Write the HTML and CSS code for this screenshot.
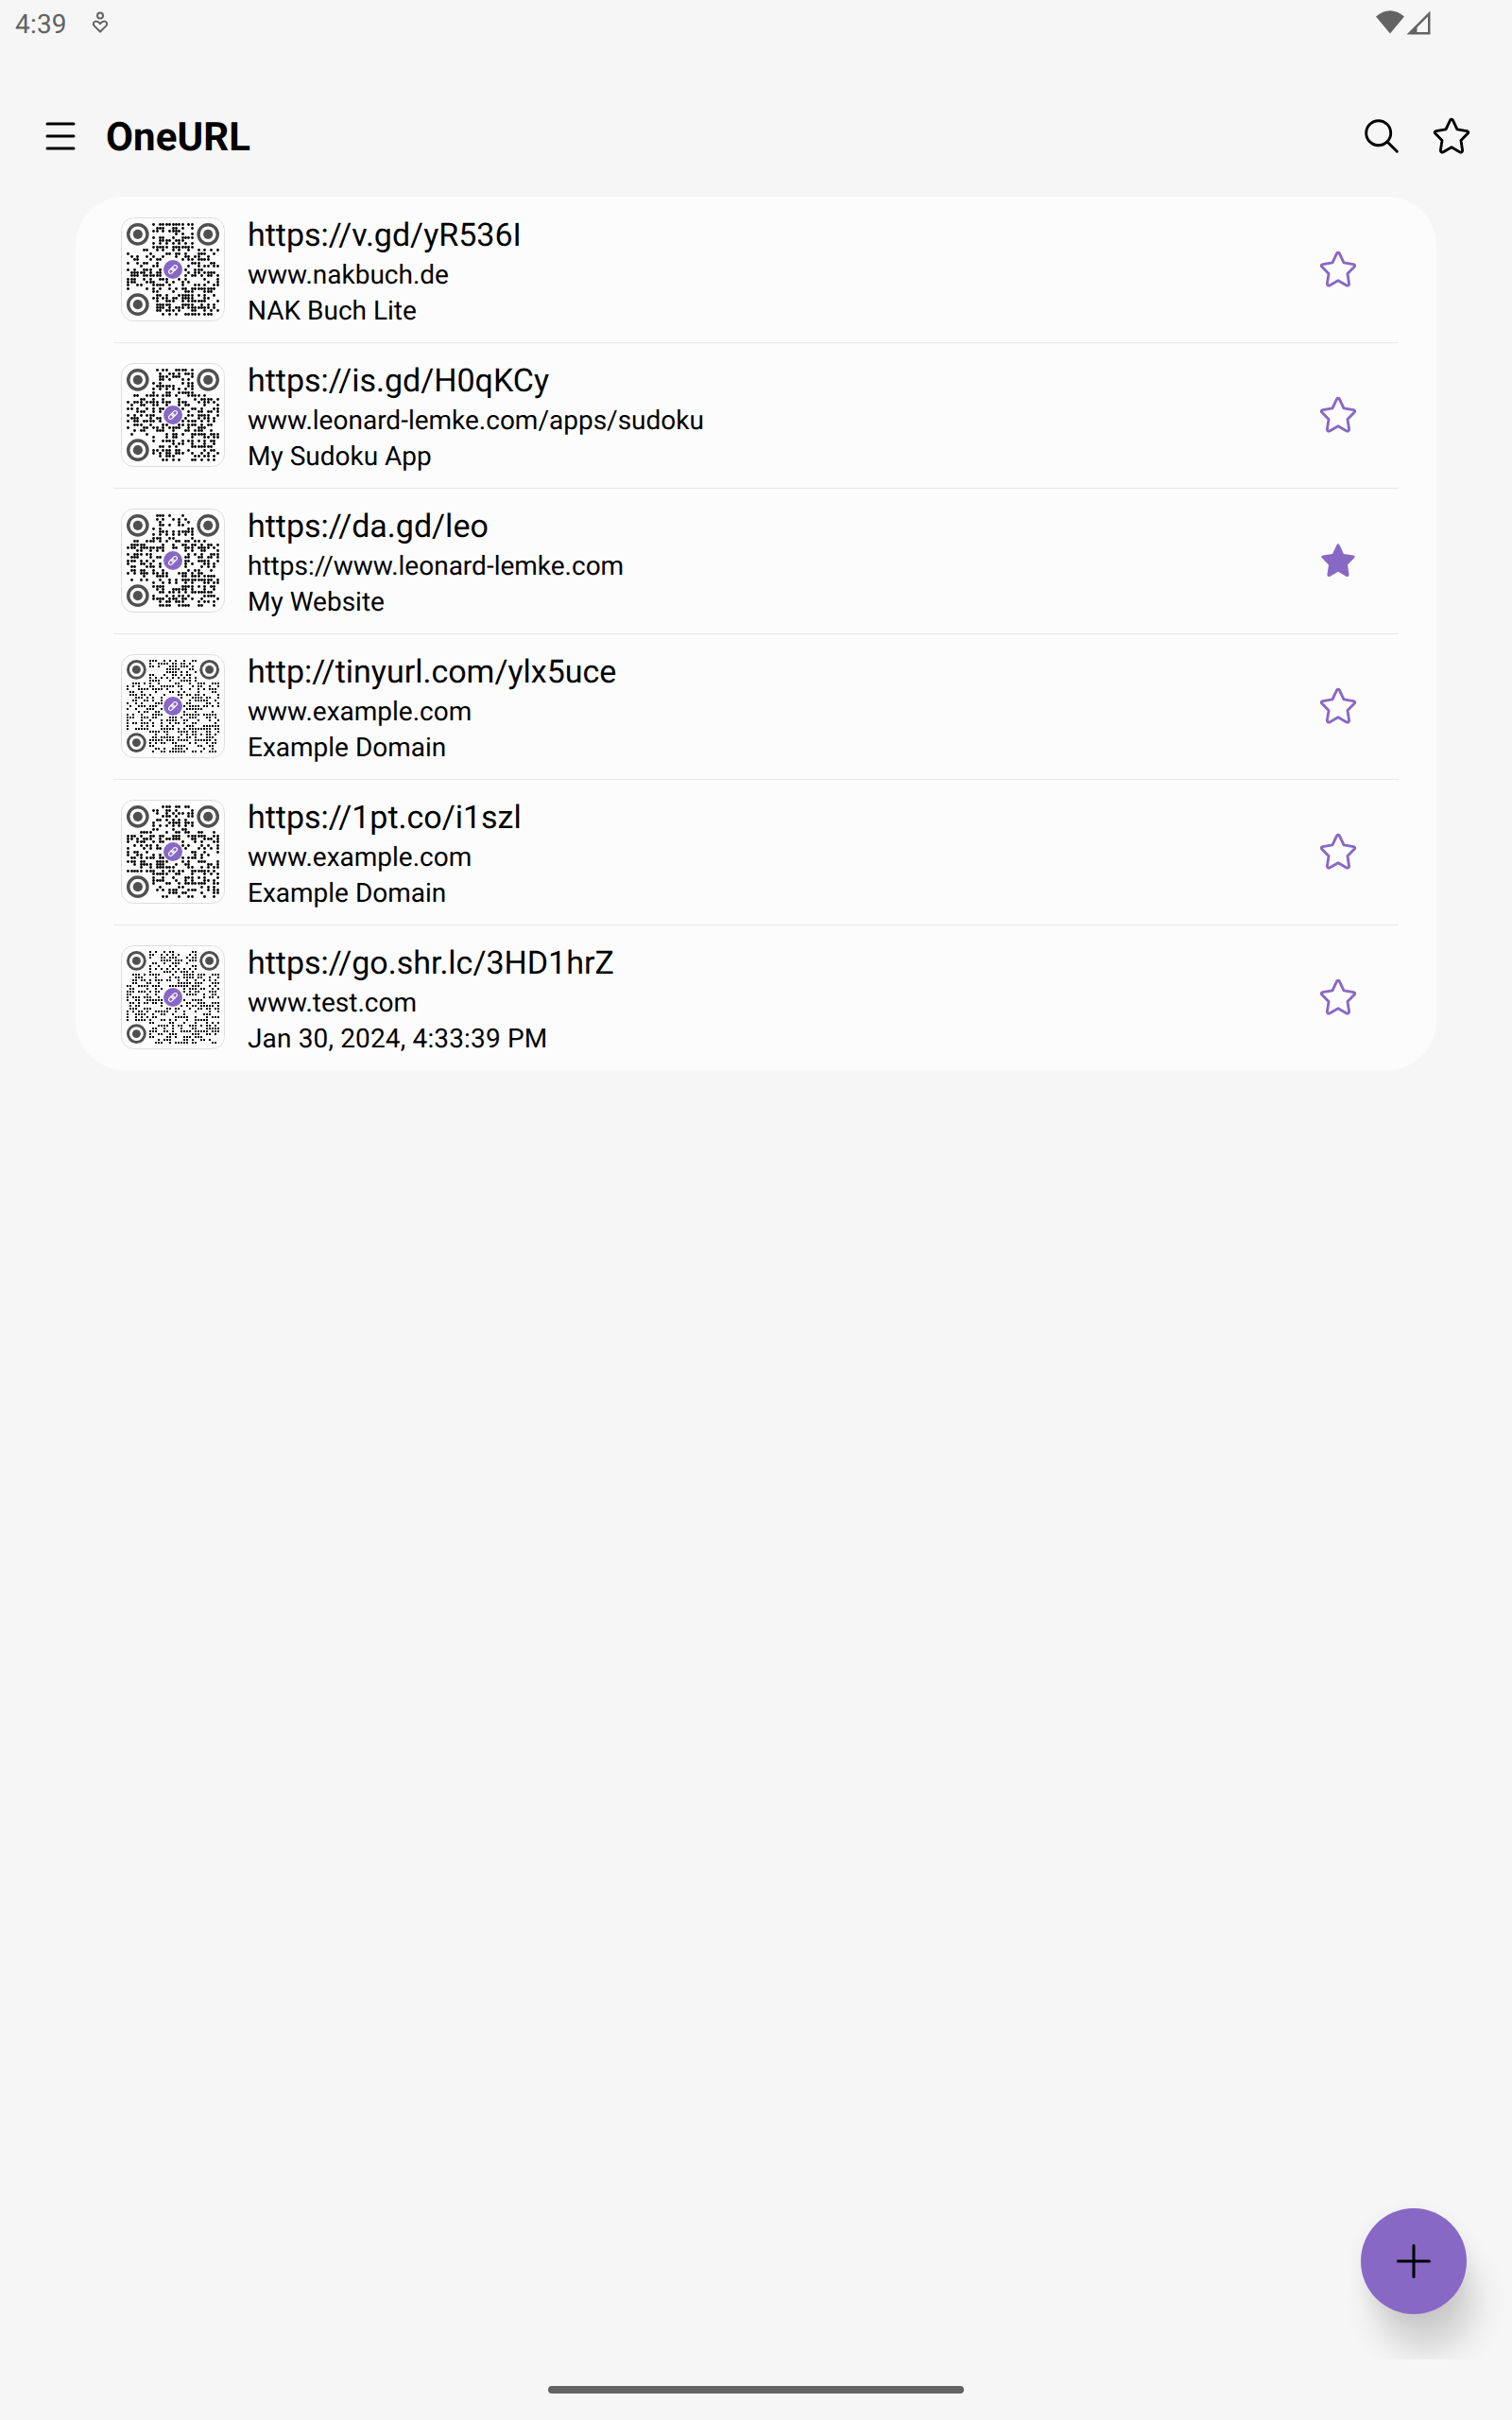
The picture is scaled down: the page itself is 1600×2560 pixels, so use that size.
FILE: index.html
```html
<!DOCTYPE html>
<html lang="en">
<head>
<meta charset="utf-8">
<title>OneURL</title>
<link rel="stylesheet" href="styles.css">
</head>
<body>
<svg width="0" height="0" class="defs">
  <symbol id="star" viewBox="0 0 40 40"><path transform="translate(0 .6)" d="M18.6 2.6Q20 .8 21.400 2.600L26 12.300L36.200 14Q38.600 14.700 37.300 16.500L30 24L31.600 34.500Q31.300 37.100 29 36.300L20 31.200L11 36.300Q8.700 37.100 8.400 34.500L10 24L2.700 16.500Q1.400 14.700 3.800 14L14 12.300Z"/></symbol>
</svg>
<div class="status">
  <span class="clock">4:39</span>
  <svg class="care" width="18" height="24" viewBox="0 0 18 24" fill="none" stroke="#636363" stroke-width="2"><circle cx="9" cy="4.500" r="3"/><path d="M9 21.500L3 15.600C-.5 12 4.500 7.800 9 13C13.500 7.800 18.500 12 15 15.600Z"/></svg>
  <svg class="signal" width="60" height="28" viewBox="0 0 60 28" fill="#636363"><path d="M1 7.500Q16 -5 31 7.500L16 25.500Z"/><path fill-rule="evenodd" d="M58.500 1.500V26.500H33.500ZM56 7.500L44.500 19V24H56Z"/></svg>
</div>
<header class="bar">
  <svg width="32" height="32" viewBox="0 0 32 32" stroke="#000" stroke-width="3" stroke-linecap="round"><path d="M2 3H30M2 16H30M2 29H30"/></svg>
  <h1>OneURL</h1>
  <svg class="search" width="36" height="36" viewBox="0 0 36 36" fill="none" stroke="#000" stroke-width="2.900" stroke-linecap="round"><circle cx="14.700" cy="14.700" r="13"/><path d="M24 24L34.300 34.300"/></svg>
  <svg class="star" width="40" height="40"><use href="#star"/></svg>
</header>
<main class="list">
  <article class="row"><svg class="qr" data-text="https://v.gd/yR536I"></svg><div class="txt"><h2>https://v.gd/yR536I</h2><p>www.nakbuch.de</p><p>NAK Buch Lite</p></div><svg class="star"><use href="#star"/></svg></article>
  <article class="row"><svg class="qr" data-text="https://is.gd/H0qKCy"></svg><div class="txt"><h2>https://is.gd/H0qKCy</h2><p>www.leonard-lemke.com/apps/sudoku</p><p>My Sudoku App</p></div><svg class="star"><use href="#star"/></svg></article>
  <article class="row"><svg class="qr" data-text="https://da.gd/leo"></svg><div class="txt"><h2>https://da.gd/leo</h2><p>https://www.leonard-lemke.com</p><p>My Website</p></div><svg class="star on"><use href="#star"/></svg></article>
  <article class="row"><svg class="qr" data-text="http://tinyurl.com/ylx5uce"></svg><div class="txt"><h2>http://tinyurl.com/ylx5uce</h2><p>www.example.com</p><p>Example Domain</p></div><svg class="star"><use href="#star"/></svg></article>
  <article class="row"><svg class="qr" data-text="https://1pt.co/i1szl"></svg><div class="txt"><h2>https://1pt.co/i1szl</h2><p>www.example.com</p><p>Example Domain</p></div><svg class="star"><use href="#star"/></svg></article>
  <article class="row"><svg class="qr" data-text="https://go.shr.lc/3HD1hrZ"></svg><div class="txt"><h2>https://go.shr.lc/3HD1hrZ</h2><p>www.test.com</p><p class="date">Jan 30, 2024, 4:33:39 PM</p></div><svg class="star"><use href="#star"/></svg></article>
</main>
<div class="fab-area"><button class="fab" aria-label="Add"><svg width="36" height="36" viewBox="0 0 36 36" stroke="#000" stroke-width="3" stroke-linecap="round"><path d="M18 1.500V34.500M1.500 18H34.500"/></svg></button></div>
<div class="nav"></div>
<script src="qr.js"></script>
</body>
</html>
```
FILE: styles.css
```css
* { box-sizing: border-box; margin: 0; padding: 0; }
body { background: #f6f6f6; color: #000; font-family: Roboto, sans-serif; text-rendering: geometricPrecision; width: 1600px; height: 2560px; overflow: hidden; display: flex; flex-direction: column; position: relative; }
.defs { position: absolute; }
.status { height: 48px; padding: 0 85px 0 16px; display: flex; align-items: center; color: #636363; }
.clock { font-size: 28px; line-height: 48px; margin-top: 3px; letter-spacing: .2px; }
.care { margin-left: 26px; }
.signal { margin-left: auto; }
.bar { height: 160px; padding: 32px 44px 0 48px; display: flex; align-items: center; }
.bar h1 { font-size: 42px; font-weight: 700; line-height: 48px; margin: 4px 0 0 32px; letter-spacing: .1px; flex: 1; }
.bar .star { margin-left: 36px; stroke: #000; }
.star { width: 40px; height: 40px; fill: none; stroke: #8868c5; stroke-width: 2.900px; stroke-linejoin: round; }
.on { fill: #8868c5; stroke-width: 0; }
.list { margin: 0 80px; background: #fcfcfc; border-radius: 52px; }
.row { height: 154px; margin: 0 40px; padding: 0 44px 0 8px; display: flex; align-items: center; }
.row + .row { box-shadow: inset 0 1px #e6e6e6; }
.qr { width: 110px; height: 110px; }
.txt { flex: 1; margin: 6px 0 0 24px; }
.txt h2 { font-size: 34px; font-weight: 400; line-height: 42px; margin-bottom: 2px; }
.txt p { font-size: 28px; line-height: 38px; }
.txt .date { letter-spacing: .150px; }
.fab-area { position: absolute; right: 0; bottom: 64px; width: 200px; height: 220px; overflow: hidden; padding: 60px 0 0 40px; }
.fab { width: 112px; height: 112px; border: 0; border-radius: 50%; background: #8868c5; display: flex; align-items: center; justify-content: center; box-shadow: 13px 42px 36px -4px rgba(0,0,0,.16), 0 4px 20px rgba(0,0,0,.06); }
.nav { position: absolute; left: 580px; bottom: 28px; width: 440px; height: 8px; border-radius: 4px; background: #636363; }
```
FILE: qr.js
```js
// Byte-mode QR encoder, error correction level H, versions 3 and 4.
const EXP = [], LOG = [];
for (let i = 0, x = 1; i < 255; i++) { EXP[i] = x; LOG[x] = i; x <<= 1; if (x > 255) x ^= 285; }
const mul = (a, b) => a && b ? EXP[(LOG[a] + LOG[b]) % 255] : 0;

function parity(data, n) {
  let gen = [1];
  for (let i = 0; i < n; i++) {
    const next = new Array(gen.length + 1).fill(0);
    gen.forEach((g, j) => { next[j] ^= g; next[j + 1] ^= mul(g, EXP[i]); });
    gen = next;
  }
  const r = data.concat(new Array(n).fill(0));
  for (let i = 0; i < data.length; i++) { const f = r[i]; gen.forEach((g, j) => { r[i + j] ^= mul(g, f); }); }
  return r.slice(data.length);
}

const MASKS = [
  (r, c) => (r + c) % 2 === 0, (r, c) => r % 2 === 0, (r, c) => c % 3 === 0, (r, c) => (r + c) % 3 === 0,
  (r, c) => ((r >> 1) + Math.floor(c / 3)) % 2 === 0, (r, c) => (r * c) % 2 + (r * c) % 3 === 0,
  (r, c) => ((r * c) % 2 + (r * c) % 3) % 2 === 0, (r, c) => ((r + c) % 2 + (r * c) % 3) % 2 === 0
];

function codewords(text, v) {
  const perBlock = v === 3 ? [13, 13] : [9, 9, 9, 9];
  const ecc = v === 3 ? 22 : 16;
  const total = perBlock.reduce((a, b) => a + b);
  let bits = '0100' + text.length.toString(2).padStart(8, '0');
  for (const ch of text) bits += ch.charCodeAt(0).toString(2).padStart(8, '0');
  bits += '0000';
  const data = bits.match(/.{8}/g).map(b => parseInt(b, 2));
  for (let i = 0; data.length < total; i++) data.push(i % 2 ? 17 : 236);
  const blocks = perBlock.map((n, i) => data.slice(i * n, i * n + n));
  const eccs = blocks.map(b => parity(b, ecc));
  const out = [];
  for (let i = 0; i < perBlock[0]; i++) blocks.forEach(b => out.push(b[i]));
  for (let i = 0; i < ecc; i++) eccs.forEach(b => out.push(b[i]));
  return out;
}

function build(text, v, mask) {
  const n = 17 + 4 * v;
  const m = Array.from({ length: n }, () => new Array(n).fill(-1));
  const square = (r0, c0, rad) => {
    for (let r = -rad; r <= rad; r++) for (let c = -rad; c <= rad; c++) {
      const y = r0 + r, x = c0 + c, d = Math.max(Math.abs(r), Math.abs(c));
      if (y >= 0 && x >= 0 && y < n && x < n) m[y][x] = rad === 4 ? +(d !== 2 && d !== 4) : +(d !== 1);
    }
  };
  square(3, 3, 4); square(3, n - 4, 4); square(n - 4, 3, 4);
  square(n - 7, n - 7, 2);
  for (let i = 8; i < n - 8; i++) m[6][i] = m[i][6] = (i + 1) % 2;
  const fmt = (2 << 3) | mask;
  let rem = fmt;
  for (let i = 0; i < 10; i++) rem = (rem << 1) ^ ((rem >> 9) * 0x537);
  const f = ((fmt << 10) | rem) ^ 0x5412;
  const bit = i => (f >> i) & 1;
  for (let i = 0; i < 6; i++) m[i][8] = bit(i);
  m[7][8] = bit(6); m[8][8] = bit(7); m[8][7] = bit(8);
  for (let i = 9; i < 15; i++) m[8][14 - i] = bit(i);
  for (let i = 0; i < 8; i++) m[8][n - 1 - i] = bit(i);
  for (let i = 8; i < 15; i++) m[n - 15 + i][8] = bit(i);
  m[n - 8][8] = 1;
  const cw = codewords(text, v);
  let k = 0, up = true;
  for (let right = n - 1; right > 0; right -= 2) {
    if (right === 6) right = 5;
    for (let i = 0; i < n; i++) for (let j = 0; j < 2; j++) {
      const r = up ? n - 1 - i : i, c = right - j;
      if (m[r][c] !== -1) continue;
      const b = k < cw.length * 8 ? (cw[k >> 3] >> (7 - (k & 7))) & 1 : 0;
      k++;
      m[r][c] = b ^ +MASKS[mask](r, c);
    }
    up = !up;
  }
  return m;
}

function penalty(m) {
  const n = m.length;
  let p = 0, dark = 0;
  const cols = m.map((_, i) => m.map(r => r[i]));
  for (const set of [m, cols]) for (const line of set) {
    const s = line.join('');
    for (const run of s.match(/0+|1+/g)) if (run.length >= 5) p += run.length - 2;
    for (let i = 0; i + 7 <= n; i++) {
      if (s.substr(i, 7) !== '1011101') continue;
      if (!s.slice(Math.max(0, i - 4), i).includes('1') || !s.slice(i + 7, i + 11).includes('1')) p += 40;
    }
  }
  for (let r = 0; r < n; r++) for (let c = 0; c < n; c++) {
    dark += m[r][c];
    if (r < n - 1 && c < n - 1 && m[r][c] === m[r][c + 1] && m[r][c] === m[r + 1][c] && m[r][c] === m[r + 1][c + 1]) p += 3;
  }
  return p + Math.floor(Math.abs(dark * 2 - n * n) * 10 / (n * n)) * 10;
}

function encode(text) {
  const v = text.length <= 24 ? 3 : 4;
  let best, score = Infinity;
  for (let k = 0; k < 8; k++) {
    const m = build(text, v, k), p = penalty(m);
    if (p < score) { score = p; best = m; }
  }
  return best;
}

document.querySelectorAll('.qr').forEach(svg => {
  const m = encode(svg.dataset.text), n = m.length, u = 98 / n;
  let s = '<rect x=".5" y=".5" width="109" height="109" rx="13" fill="#fdfdfd" stroke="#dedede"/>';
  for (let r = 0; r < n; r++) for (let c = 0; c < n; c++) {
    if (!m[r][c] || (r < 7 && (c < 7 || c >= n - 7)) || (r >= n - 7 && c < 7)) continue;
    const x = 6 + (c + .5) * u, y = 6 + (r + .5) * u;
    if (Math.hypot(x - 55, y - 55) < 11.5) continue;
    s += n === 29
      ? `<circle cx="${Math.floor(x) + .5}" cy="${Math.floor(y) + .5}" r="1.400"/>`
      : `<rect x="${Math.round(x - 1)}" y="${Math.round(y - 1)}" width="2" height="2"/>`;
  }
  for (const [r, c] of [[3.5, 3.5], [3.5, n - 3.5], [n - 3.5, 3.5]]) {
    s += `<circle cx="${6 + c * u}" cy="${6 + r * u}" r="${3 * u}" fill="none" stroke="#505050" stroke-width="${u}"/><circle cx="${6 + c * u}" cy="${6 + r * u}" r="${1.5 * u}" fill="#505050"/>`;
  }
  s += '<circle cx="55" cy="55" r="10" fill="#8868c5"/><g transform="translate(55 55) rotate(-45)" fill="none" stroke="#fff" stroke-width="1.200"><rect x="-5.500" y="-2" width="6.500" height="4" rx="2"/><rect x="-1" y="-2" width="6.500" height="4" rx="2"/></g>';
  svg.setAttribute('viewBox', '0 0 110 110');
  svg.innerHTML = s;
});
```
